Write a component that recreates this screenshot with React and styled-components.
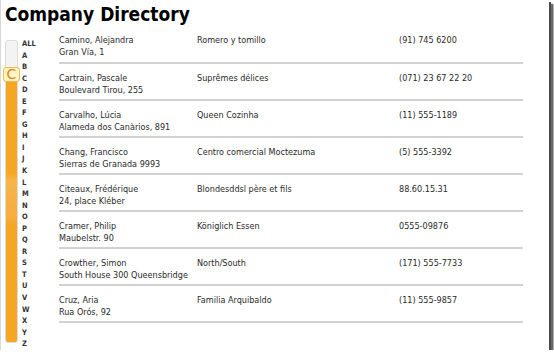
import React from "react";
import styled, { createGlobalStyle } from "styled-components";

const Global = createGlobalStyle`
  html, body { margin: 0; padding: 0; background: #ffffff; }
  body { font-family: "DejaVu Sans Condensed", "DejaVu Sans", sans-serif; }
`;

const Frame = styled.div`
  box-sizing: border-box;
  width: 549px;
  height: 350px;
  background: #ffffff;
  border-left: 1px solid #d8d8d8;
  box-shadow: 2px 2px 0 #4a4a4a, 4px 4px 1px #6a6a6a, 5px 5px 2px #9a9a9a;
  overflow: hidden;
  padding: 3px 0 0 4px;
`;

const Title = styled.h1`
  margin: 0;
  height: 24px;
  font-family: "DejaVu Sans Condensed", "DejaVu Sans", sans-serif;
  font-weight: bold;
  font-size: 19px;
  line-height: 22px;
  color: #000;
`;

const Body = styled.div`
  display: flex;
  align-items: flex-start;
`;

const Picker = styled.div`
  display: flex;
  width: 54px;
  padding-top: 13px;
`;

const Track = styled.div`
  position: relative;
  box-sizing: border-box;
  width: 13px;
  height: 303px;
  border: 1px solid #dcdcdc;
  border-radius: 3px;
  background: linear-gradient(
    to bottom,
    #f3f3f3 0px,
    #f3f3f3 30px,
    #f5a623 30px,
    #f5a623 132px,
    #f7b54a 140px,
    #f6ae3c 175px,
    #f5a623 185px,
    #f5a623 100%
  );
`;

const Thumb = styled.div`
  position: absolute;
  left: -3px;
  top: 26px;
  box-sizing: border-box;
  width: 17px;
  height: 15px;
  border: 1px solid #f3b94a;
  border-radius: 3px;
  background: #fff4c8;
  color: #d98a10;
  font-family: "DejaVu Sans", sans-serif;
  font-size: 14px;
  line-height: 13px;
  text-align: center;
`;

const Letters = styled.ul`
  list-style: none;
  margin: -2px 0 0 4px;
  padding: 0;
`;

const Letter = styled.li`
  height: 11.55px;
  line-height: 11.55px;
  font-family: "DejaVu Sans Condensed", "DejaVu Sans", sans-serif;
  font-size: 7.5px;
  font-weight: bold;
  color: #333;
`;

const Table = styled.div`
  width: 464px;
`;

const Row = styled.div`
  display: grid;
  grid-template-columns: 138px 202px 1fr;
  height: 37px;
  box-sizing: border-box;
  padding-top: ${(p) => (p.$first ? "7px" : "8px")};
  border-bottom: 2px solid #d2d2d2;
  font-size: 9px;
  color: #2a2a2a;
`;

const Cell = styled.div`
  line-height: 12px;
  white-space: nowrap;
`;

const letters = ["ALL", ..."ABCDEFGHIJKLMNOPQRSTUVWXYZ".split("")];

const rows = [
  ["Camino, Alejandra", "Gran Vía, 1", "Romero y tomillo", "(91) 745 6200"],
  ["Cartrain, Pascale", "Boulevard Tirou, 255", "Suprêmes délices", "(071) 23 67 22 20"],
  ["Carvalho, Lúcia", "Alameda dos Canàrios, 891", "Queen Cozinha", "(11) 555-1189"],
  ["Chang, Francisco", "Sierras de Granada 9993", "Centro comercial Moctezuma", "(5) 555-3392"],
  ["Citeaux, Frédérique", "24, place Kléber", "Blondesddsl père et fils", "88.60.15.31"],
  ["Cramer, Philip", "Maubelstr. 90", "Königlich Essen", "0555-09876"],
  ["Crowther, Simon", "South House 300 Queensbridge", "North/South", "(171) 555-7733"],
  ["Cruz, Aria", "Rua Orós, 92", "Familia Arquibaldo", "(11) 555-9857"],
];

export default function App() {
  return (
    <>
      <Global />
      <Frame>
        <Title>Company Directory</Title>
        <Body>
          <Picker>
            <Track>
              <Thumb>C</Thumb>
            </Track>
            <Letters>
              {letters.map((l) => (
                <Letter key={l}>{l}</Letter>
              ))}
            </Letters>
          </Picker>
          <Table>
            {rows.map((r, i) => (
              <Row key={r[0]} $first={i === 0}>
                <Cell>
                  {r[0]}
                  <br />
                  {r[1]}
                </Cell>
                <Cell>{r[2]}</Cell>
                <Cell>{r[3]}</Cell>
              </Row>
            ))}
          </Table>
        </Body>
      </Frame>
    </>
  );
}
